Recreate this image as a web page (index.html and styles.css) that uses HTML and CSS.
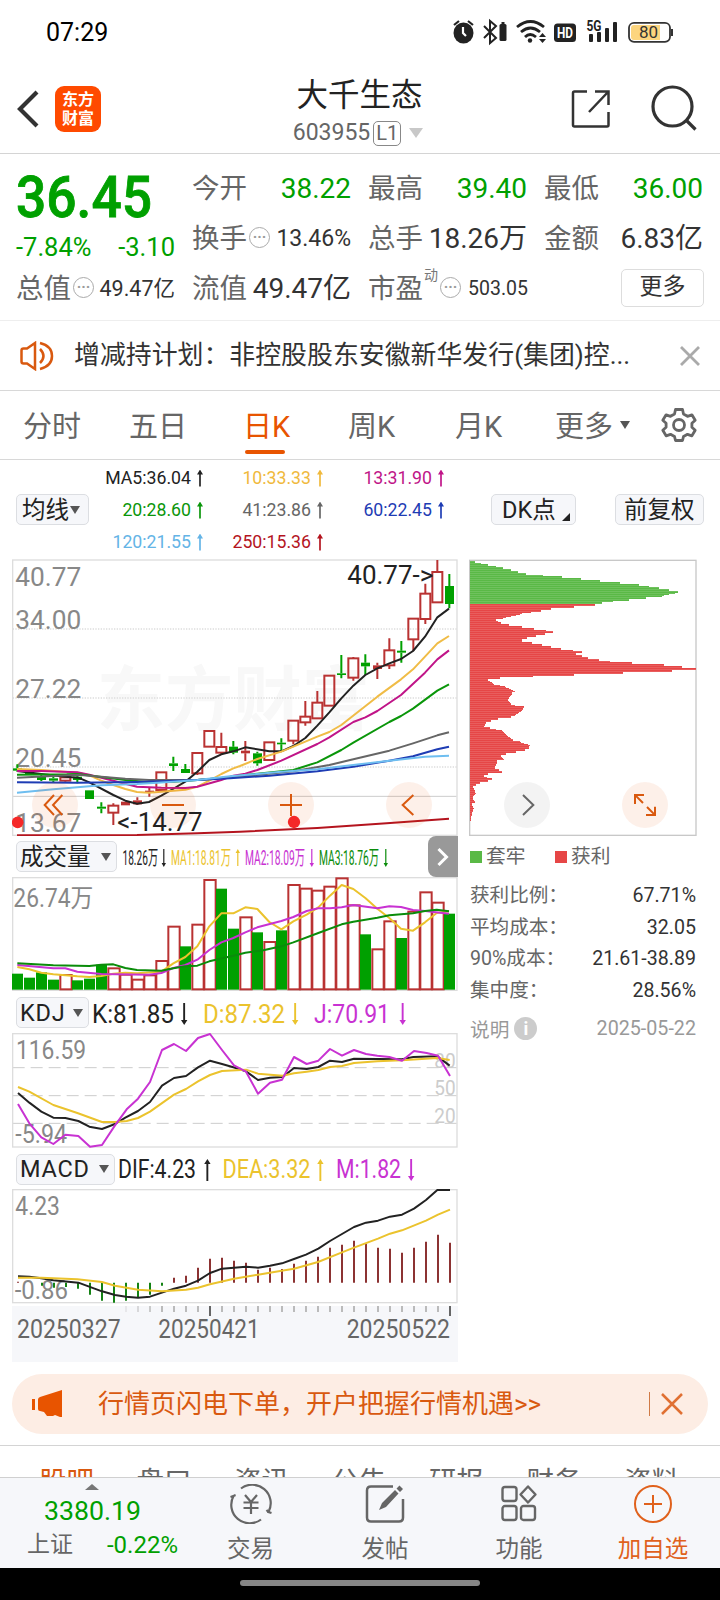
FILE: index.html
```html
<!DOCTYPE html>
<html lang="zh-CN">
<head>
<meta charset="utf-8">
<title>大千生态 603955</title>
<link rel="stylesheet" href="styles.css">
</head>
<body>
<div class="phone">
  <div class="status">
    <span class="clock">07:29</span>
    <svg class="status-icons" width="224" height="36" viewBox="450 14 224 36">
      <g fill="#222">
        <ellipse cx="463.5" cy="33" rx="10" ry="10.5"/>
        <path d="M454 25l5-4M473 25l-5-4" stroke="#222" stroke-width="2.2"/>
        <path d="M463 27v6l3 3" stroke="#fff" stroke-width="2.2" fill="none"/>
        <path d="M484 26l12 12-6 5V21l6 5-12 12" fill="none" stroke="#222" stroke-width="2"/>
        <rect x="499.500" y="24" width="7" height="17" rx="1.500"/><rect x="501.500" y="22" width="3" height="3"/>
        <g fill="none" stroke="#222" stroke-width="2.800"><path d="M517 27q13.500-11 27 0M521 32q9.500-8 19 0M525 37q5-5 11 0"/></g>
        <circle cx="530" cy="40.500" r="2.200"/><path d="M539 37l3.500-4 3.500 4zM539 39l3.500 4 3.500-4z"/>
        <rect x="554" y="23.500" width="22" height="18.500" rx="3.500"/>
        <rect x="589" y="34" width="4" height="8" rx="1"/><rect x="597" y="32" width="4" height="10" rx="1"/><rect x="605" y="28" width="4" height="14" rx="1"/><rect x="613" y="22" width="4" height="20" rx="1"/>
      </g>
      <text x="557" y="38" font-size="15" font-weight="700" fill="#fff" textLength="16" lengthAdjust="spacingAndGlyphs">HD</text>
      <text x="586.500" y="31" font-size="14" font-weight="700" fill="#222" textLength="15" lengthAdjust="spacingAndGlyphs">5G</text>
      <rect x="629" y="22.800" width="41" height="19" rx="5" fill="#fff" stroke="#333" stroke-width="1.800"/>
      <path d="M634 25h26v15h-26q-3 0-3-3v-9q0-3 3-3z" fill="#fcd57e"/>
      <rect x="671" y="29" width="2" height="7" fill="#333"/>
      <text x="639" y="38.300" font-size="17" fill="#333">80</text>
    </svg>
  </div>

  <header class="header">
    <svg class="back" width="22" height="38" viewBox="0 0 22 38"><path d="M20 2L3 19 20 36" fill="none" stroke="#333" stroke-width="4.200"/></svg>
    <div class="logo"><span>东方</span><span>财富</span></div>
    <div class="title">
      <div class="name">大千生态</div>
      <div class="code"><span>603955</span><b class="level">L1</b><i class="down"></i></div>
    </div>
    <svg class="share" width="40" height="40" viewBox="0 0 40 40"><g fill="none" stroke="#333" stroke-width="2.500"><path d="M16 2.500H3.500q-1.500 0-1.500 1.500V36q0 1.500 1.500 1.500H36q1.500 0 1.500-1.500V23"/><path d="M24 2.500h13.500V16M37 3L18 23"/></g></svg>
    <svg class="search" width="46" height="46" viewBox="0 0 46 46"><g fill="none" stroke="#333" stroke-width="3.200"><circle cx="21.500" cy="21.500" r="19.500"/><path d="M35.500 35.500L44.500 44.500"/></g></svg>
  </header>

  <section class="quote">
    <div class="price-box"><svg width="158" height="68" viewBox="0 0 158 68"><text class="price" x="-1" y="52.500" textLength="136" lengthAdjust="spacingAndGlyphs">36.45</text></svg><div class="change"><span>-7.84%</span><span>-3.10</span></div></div>
    <div class="cell r1"><label>今开</label><em class="green">38.22</em></div>
    <div class="cell r1"><label>最高</label><em class="green">39.40</em></div>
    <div class="cell r1"><label>最低</label><em class="green">36.00</em></div>
    <div class="cell r2"><label>换手</label><i class="dots">···</i><em class="mid">13.46%</em></div>
    <div class="cell r2"><label>总手</label><em>18.26万</em></div>
    <div class="cell r2"><label>金额</label><em>6.83亿</em></div>
    <div class="cell r3"><label>总值</label><i class="dots">···</i><em class="small">49.47亿</em></div>
    <div class="cell r3"><label>流值</label><em>49.47亿</em></div>
    <div class="cell r3"><label>市盈</label><sup>动</sup><i class="dots">···</i><em class="pe">503.05</em></div>
    <div class="cell r3 end"><span class="more-btn">更多</span></div>
  </section>

  <section class="notice">
    <svg width="34" height="30" viewBox="0 0 34 30"><g fill="none" stroke="#d9590f" stroke-width="2.500"><path d="M15 2L7 7.500H3.500q-2 0-2 2v11q0 2 2 2H7L15 28zM20 8q7 7 0 14"/><path d="M20 2q12 3 12 13T20 28"/></g></svg>
    <span class="notice-text">增减持计划：非控股股东安徽新华发行(集团)控...</span>
    <svg class="close" width="20" height="20" viewBox="0 0 20 20"><path d="M1 1l18 18M19 1L1 19" stroke="#aaa" stroke-width="2.800"/></svg>
  </section>

  <nav class="tabs">
    <span>分时</span><span>五日</span><span class="active">日K</span><span>周K</span><span>月K</span><span>更多<i class="tri"></i></span>
    <svg width="36" height="36" viewBox="-18 -18 36 36"><g fill="none" stroke="#666" stroke-width="2.800" stroke-linejoin="round"><path d="M-3.500-15.500h7l1 4.500 4 2.300 4.400-1.500 3.300 5.500-3.300 3v4l3.300 3-3.300 5.500-4.400-1.500-4 2.200-1 4h-7l-1-4-4-2.200-4.400 1.500-3.300-5.500 3.300-3v-4l-3.300-3 3.300-5.500 4.400 1.500 4-2.300z"/><circle r="5.500"/></g></svg>
  </nav>

  <section class="ma-bar">
    <span class="pill">均线<i class="tri"></i></span>
    <div class="ma-grid">
      <span class="c-black">MA5:36.04<b class="up"></b></span><span class="c-gold">10:33.33<b class="up"></b></span><span class="c-mag">13:31.90<b class="up"></b></span>
      <span class="c-green">20:28.60<b class="up"></b></span><span class="c-gray">41:23.86<b class="up"></b></span><span class="c-blue">60:22.45<b class="up"></b></span>
      <span class="c-sky">120:21.55<b class="up"></b></span><span class="c-red">250:15.36<b class="up"></b></span>
    </div>
    <span class="pill dk">DK点<i class="corner"></i></span>
    <span class="pill fq">前复权</span>
  </section>

  <main class="charts">
    <div class="left">
      <svg id="price" width="446" height="277" viewBox="36 27 1338 831"></svg>
      <div class="ind vol-head"><span class="pill">成交量<i class="tri"></i></span>
        <svg width="310" height="40" viewBox="120 837 310 40" font-size="20">
          <g fill="#222"><text x="122.500" y="864.500" textLength="35.500" lengthAdjust="spacingAndGlyphs">18.26万</text><path d="M163.200 849h1.200v14h1.600l-2.200 4-2.200-4h1.600z"/></g>
          <g fill="#ebc32d"><text x="171" y="864.500" textLength="60" lengthAdjust="spacingAndGlyphs">MA1:18.81万</text><path d="M237.200 866h1.200v-13h1.600l-2.200-4-2.200 4h1.600z"/></g>
          <g fill="#c832d2"><text x="245" y="864.500" textLength="60" lengthAdjust="spacingAndGlyphs">MA2:18.09万</text><path d="M311.200 849h1.200v14h1.600l-2.200 4-2.200-4h1.600z"/></g>
          <g fill="#0a8c0a"><text x="319" y="864.500" textLength="60" lengthAdjust="spacingAndGlyphs">MA3:18.76万</text><path d="M385.200 849h1.200v14h1.600l-2.200 4-2.200-4h1.600z"/></g>
        </svg>
        <span class="expand"><svg width="14" height="20" viewBox="0 0 14 20"><path d="M2.500 2l8 8-8 8" fill="none" stroke="#fff" stroke-width="3"/></svg></span>
      </div>
      <svg id="volume" width="446" height="114" viewBox="36 127 1338 342"></svg>
      <div class="ind kdj-head"><span class="pill">KDJ<i class="tri"></i></span>
        <svg width="340" height="40" viewBox="90 993 340 40" font-size="25">
          <g fill="#222"><text x="92" y="1022.500" textLength="82" lengthAdjust="spacingAndGlyphs">K:81.85</text><path d="M183.200 1003h1.900v17h2.300l-3.200 5-3.200-5h2.200z"/></g>
          <g fill="#ebc32d"><text x="203" y="1022.500" textLength="82" lengthAdjust="spacingAndGlyphs">D:87.32</text><path d="M294.200 1003h1.900v17h2.300l-3.200 5-3.200-5h2.200z"/></g>
          <g fill="#c832d2"><text x="314" y="1022.500" textLength="76" lengthAdjust="spacingAndGlyphs">J:70.91</text><path d="M401.700 1003h1.900v17h2.300l-3.200 5-3.200-5h2.200z"/></g>
        </svg>
      </div>
      <svg id="kdj" width="446" height="115" viewBox="36 39 1338 345"></svg>
      <div class="ind macd-head"><span class="pill">MACD<i class="tri"></i></span>
        <svg width="320" height="40" viewBox="116 1149 320 40" font-size="25">
          <g fill="#222"><text x="118" y="1178" textLength="78" lengthAdjust="spacingAndGlyphs">DIF:4.23</text><path d="M206.400 1181h1.900v-17h2.300l-3.200-5-3.200 5h2.200z"/></g>
          <g fill="#ebc32d"><text x="222.500" y="1178" textLength="88" lengthAdjust="spacingAndGlyphs">DEA:3.32</text><path d="M319.400 1181h1.900v-17h2.300l-3.200-5-3.200 5h2.200z"/></g>
          <g fill="#c832d2"><text x="336" y="1178" textLength="65" lengthAdjust="spacingAndGlyphs">M:1.82</text><path d="M410.200 1159h1.900v17h2.300l-3.200 5-3.200-5h2.200z"/></g>
        </svg>
      </div>
      <svg id="macd" width="446" height="115" viewBox="36 28 1338 345"></svg>
      <svg id="axis" class="axis" width="446" height="56" viewBox="36 378 1338 168"></svg>
    </div>
    <aside class="right">
      <svg id="chips" width="228" height="277" viewBox="27 27 684 831"></svg>
      <div class="legend"><span><i class="sq g"></i>套牢</span><span><i class="sq r"></i>获利</span></div>
      <dl class="stats">
        <dt>获利比例：</dt><dd>67.71%</dd>
        <dt>平均成本：</dt><dd>32.05</dd>
        <dt>90%成本：</dt><dd>21.61-38.89</dd>
        <dt>集中度：</dt><dd>28.56%</dd>
      </dl>
      <div class="note"><span>说明</span><i class="info">i</i><time>2025-05-22</time></div>
    </aside>
  </main>

  <div class="banner">
    <svg width="31" height="28" viewBox="0 0 31 28"><path d="M0 9h3v11H0zM6 9.500q0-2 2-2.500L30 0v27h-2l-5-2-2 1h-6l-3-4-4-1q-2 0-2-2z" fill="#e85400"/></svg>
    <span class="banner-text">行情页闪电下单，开户把握行情机遇&gt;&gt;</span>
    <i class="bar"></i>
    <svg width="22" height="22" viewBox="0 0 22 22"><path d="M1 1l20 20M21 1L1 21" stroke="#e07033" stroke-width="2.500"/></svg>
  </div>

  <div class="subtabs"><span class="active">股吧</span><span>盘口</span><span>资讯</span><span>公告</span><span>研报</span><span>财务</span><span>资料</span></div>

  <footer class="bottom">
    <div class="index"><i class="caret"></i><b>3380.19</b><div><span>上证</span><em>-0.22%</em></div></div>
    <div class="item"><svg width="44" height="40" viewBox="-22 -20 44 40"><g fill="none" stroke="#666" stroke-width="2.200"><path d="M-10-15.500A18.500 18.500 0 0 1 17.500 8l3 1M17.500 8l-2-2M10 15.500A18.500 18.500 0 0 1-17.500-8l-3 1M-17.500-8l2-1"/><path d="M-6-9L0-2l6-7M-7.500-1.500h15M-7.500 4h15M0-2v12"/></g></svg><span>交易</span></div>
    <div class="item"><svg width="44" height="40" viewBox="-22 -20 44 40"><path d="M8-17.500h-22q-4 0-4 4v27q0 4 4 4h28q4 0 4-4V-5" fill="none" stroke="#666" stroke-width="2.500"/><path d="M-6 6l3-7L10-14l3.500 3.500L1 3zM11.500-15.500l3-3 3.500 3.500-3 3z" fill="#666"/></svg><span>发帖</span></div>
    <div class="item"><svg width="44" height="40" viewBox="-22 -20 44 40"><g fill="none" stroke="#666" stroke-width="2.400"><rect x="-16.500" y="-17" width="14" height="14" rx="2.500"/><rect x="-16.500" y="2" width="14" height="14" rx="2.500"/><rect x="2" y="2" width="14" height="14" rx="2.500"/><path d="M9-17.500l7.500 8L9-1.500l-7.500-8z" stroke-linejoin="round"/></g></svg><span>功能</span></div>
    <div class="item add"><svg width="44" height="40" viewBox="-22 -20 44 40"><g fill="none" stroke="#e0611c" stroke-width="2"><circle r="18"/><path d="M-9 0H9M0-9V9"/></g></svg><span>加自选</span></div>
  </footer>
  <div class="home"><i></i></div>
</div>
<script src="charts.js"></script>
</body>
</html>
```
FILE: styles.css
```css
* { box-sizing: border-box; }
body { margin: 0; background: #fff; color: #333; font-family: Roboto, "Noto Sans CJK SC", sans-serif; font-weight: 400; }
i, em { font-style: normal; }
svg { display: block; flex: none; font-family: Roboto, "Noto Sans CJK SC", sans-serif; }
.phone { width: 720px; height: 1600px; overflow: hidden; display: flex; flex-direction: column; }
.phone > * { flex: none; white-space: nowrap; }
.green { color: #00a000; }

.status { height: 64px; padding: 14px 46px 0; display: flex; justify-content: space-between; }
.clock { font-size: 25px; line-height: 37px; color: #000; }

.header { height: 90px; border-bottom: 1px solid #d4d4d4; display: grid; grid-template-columns: 55px 46px 1fr 40px 46px; align-items: start; padding-right: 23px; }
.back { margin: 26px 0 0 17px; }
.logo { margin-top: 22px; height: 46px; border-radius: 9px; background: #ff4a00; color: #fff; font-size: 16px; font-weight: 700; line-height: 19px; padding-top: 4px; display: flex; flex-direction: column; align-items: center; }
.title { margin-right: -9px; display: flex; flex-direction: column; align-items: center; }
.name { font-size: 31.500px; line-height: 40px; margin: 12px 2px 0 0; color: #222; }
.code { display: flex; align-items: center; font-size: 23px; line-height: 36px; color: #666; margin: -1px 5px 0 0; }
.level { font-weight: 400; font-size: 20px; line-height: 22px; height: 25px; width: 28px; text-align: center; border: 1.500px solid #888; border-radius: 5px; margin-left: 3px; }
.down { border: 7px solid transparent; border-top: 10px solid #c8c8c8; border-bottom: 0; margin-left: 8px; }
.share { margin: 25px 0 0 -40px; }
.search { margin: 21px 0 0; }

.quote { height: 167px; border-bottom: 1px solid #eee; padding: 10px 17px 0; display: grid; grid-template-columns: repeat(4, 158px); column-gap: 18px; grid-template-rows: 50px 50px 50px; }
.price-box { grid-row: 1 / 3; color: #00a000; }
.price { font-size: 57px; font-weight: 500; fill: #00a000; stroke: #00a000; stroke-width: .800px; }
.change { display: flex; justify-content: space-between; font-size: 25.500px; line-height: 30px; margin: 0 0 0 -1px; }
.cell { display: flex; align-items: center; line-height: 40px; height: 50px; font-size: 28px; }
.cell label { color: #666; font-size: 27.500px; margin-left: -1px; }
.cell em { margin-left: auto; }
.cell em.mid { font-size: 23px; }
.cell em.small { font-size: 21.500px; }
.cell em.pe { font-size: 19.500px; margin-right: -1px; }
.cell sup { font-size: 14px; line-height: 16px; color: #777; align-self: flex-start; margin: 3px 0 0 1px; }
.dots { width: 21px; height: 21px; border: 1.500px solid #aaa; border-radius: 50%; font-size: 15px; line-height: 18px; font-weight: 700; color: #999; text-align: center; margin: -4px 0 0 2px; }
.end { justify-content: flex-end; }
.more-btn { width: 83px; height: 38px; border: 1px solid #ddd; border-radius: 5px; font-size: 23px; line-height: 34px; text-align: center; margin: -2px -1px 0 0; }

.notice { height: 70px; border-bottom: 1px solid #d8d8d8; padding: 0 20px; display: flex; align-items: center; }
.notice-text { font-size: 25.900px; line-height: 40px; margin: -1px 0 0 20px; flex: 1; }

.tabs { height: 69px; border-bottom: 1px solid #d8d8d8; padding-left: 23px; display: grid; grid-template-columns: 106px 114px 105px 107px 100px 106px 40px; font-size: 29px; line-height: 72px; color: #666; }
.tabs span { height: 68px; }
.tabs svg { margin-top: 16px; }
.tabs .active { color: #e85400; }
.tabs .active::after { content: ""; display: block; width: 40px; height: 4px; border-radius: 2px; background: #e85400; margin: -13px 0 0 2px; }
.tri { display: inline-block; border: 5px solid transparent; border-top: 8px solid #555; border-bottom: 0; vertical-align: middle; }
.tabs .tri { margin: -8px 0 0 7px; }

.ma-bar { height: 99px; display: flex; align-items: center; padding: 0 16px; }
.pill { height: 31px; border: 1.500px solid #dcdee2; border-radius: 5px; background: #f6f7fa; color: #222; font-size: 23.500px; line-height: 28px; padding: 0 5px 0 3px; display: inline-flex; align-items: center; }
.ma-bar .pill { width: 73px; padding-left: 5px; }
.ma-bar .pill .tri { margin-left: 1px; }
.ma-bar .dk { width: 85px; padding-left: 10px; margin-left: auto; }
.corner { border-left: 8px solid transparent; border-bottom: 8px solid #222; margin: 14px 0 0 6px; }
.ma-bar .fq { width: 89px; padding-left: 8px; margin-left: 39px; }
.ma-grid { display: grid; grid-template-columns: 115px 120px 121px; grid-template-rows: 32px 32px 32px; font-size: 17.700px; line-height: 32px; margin-top: 1px; }
.ma-grid span { display: flex; justify-content: flex-end; align-items: center; }
.up { width: 6px; height: 17px; flex: none; background: currentColor; clip-path: polygon(50% 0, 100% 30%, 64% 30%, 64% 100%, 36% 100%, 36% 30%, 0 30%); margin-left: 6px; margin-right: 1px; }
.c-black { color: #222; } .c-gold { color: #f0b93c; } .c-mag { color: #c01488; } .c-green { color: #0a960a; }
.c-gray { color: #666; } .c-blue { color: #1e3cb4; } .c-sky { color: #64b4e6; } .c-red { color: #b4141e; }

.charts { height: 815px; display: flex; padding-left: 12px; }
.left { width: 446px; }
.right { width: 228px; margin-left: 11px; }
.ind { height: 41px; display: flex; align-items: center; padding: 1px 0 0 4px; }
.ind .tri { margin-left: auto; }
.vol-head { padding-top: 0; }
.vol-head .pill { width: 101px; }
.vol-head svg { margin-left: 3px; }
.vol-head .expand { width: 30px; height: 41px; margin-left: -2px; background: #999; border-radius: 8px 0 0 8px; flex: none; display: flex; align-items: center; justify-content: center; }
.vol-head .expand svg { margin: 0; }
.kdj-head { height: 42px; } .kdj-head .pill { width: 73px; letter-spacing: .800px; }
.kdj-head svg { margin-left: 1px; }
.macd-head { height: 41px; } .macd-head .pill { width: 99px; letter-spacing: .800px; }
.macd-head svg { margin-left: 1px; }
.axis { margin-top: 2px; background: #f6f7fa; }

.legend { display: grid; grid-template-columns: 85px 1fr; font-size: 19.700px; line-height: 42px; height: 40px; color: #666; padding-left: 1px; }
.sq { display: inline-block; width: 12px; height: 12px; margin-right: 4px; }
.sq.g { background: #5ab946; } .sq.r { background: #e64646; }
.stats { margin: 4px 13px 0 1px; display: grid; grid-template-columns: auto 1fr; grid-auto-rows: 31.600px; font-size: 19.600px; line-height: 32px; width: 226px; }
.stats dt { color: #666; } .stats dd { margin: 0; text-align: right; }
.note { display: flex; align-items: center; height: 44px; margin: 0 1px 0 1px; font-size: 19.700px; color: #999; }
.info { width: 23px; height: 23px; border-radius: 50%; background: #ccc; color: #fff; font-weight: 700; font-size: 18px; line-height: 23px; text-align: center; margin-left: 5px; }
.note time { margin-left: auto; }

.banner { margin: 0 12px; height: 60px; border-radius: 30px; background: #fdede4; display: flex; align-items: center; padding: 0 25px 0 20px; color: #d9590f; }
.banner-text { font-size: 26px; line-height: 40px; margin: -1px 0 0 35px; flex: 1; }
.bar { width: 1.500px; height: 24px; background: #d07a46; margin-right: 11px; }

.subtabs { margin-top: 11px; height: 32px; border-top: 1px solid #d4d4d4; overflow: hidden; display: grid; grid-template-columns: repeat(7, 97.500px); padding-left: 39px; font-size: 27.500px; line-height: 40px; padding-top: 16px; color: #666; }
.subtabs .active { color: #d9590f; }
.bottom { height: 91px; background: #f6f7fa; border-top: 1px solid #d0d0d0; display: grid; grid-template-columns: 183px 135px 134px 134px 134px; color: #666; }
.index { display: flex; flex-direction: column; align-items: center; }
.index .caret { border: 7px solid transparent; border-bottom: 6px solid #777; border-top: 0; margin: 6px 0 0 1px; }
.index b { font-weight: 400; font-size: 26.700px; line-height: 42px; color: #00a000; margin-left: 2px; }
.index div { display: flex; font-size: 23px; line-height: 32px; padding-left: 22px; gap: 34px; margin-top: -3px; }
.index em { color: #00a000; font-size: 24px; }
.item { display: flex; flex-direction: column; align-items: center; font-size: 23.500px; line-height: 32px; }
.item svg { margin: 6px 0 9px; }
.add { color: #e0611c; }
.home { height: 32px; background: #000; padding-top: 12px; }
.home i { display: block; width: 240px; height: 6px; border-radius: 3px; background: #868686; margin: 0 auto; }

.label { fill: #888; font-size: 75px; }
.line { fill: none; stroke-width: 6; stroke-linejoin: round; }
.frame { fill: none; stroke: #ddd; stroke-width: 4; }
```
FILE: charts.js
```js
// All chart data is in thirds of a pixel, one trading day every 36 units.
const RED = '#b93232', GREEN = '#00a000';
const set = (id, html) => { document.getElementById(id).innerHTML = html; };
const line = (c, pts) => `<polyline class="line" stroke="${c}" points="${pts}"/>`;
const rect = (x, y, w, h, a) => `<rect x="${x}" y="${y}" width="${w}" height="${h}" ${a}/>`;
const text = (x, y, w, s, a = 'class="label"') => `<text x="${x}" y="${y}" textLength="${w}" lengthAdjust="spacingAndGlyphs" ${a}>${s}</text>`;
const button = (x, icon, bg = '#e85000', c = '#d9590f') => `<circle cx="${x}" cy="765" r="69" fill="${bg}" opacity=".085"/><path d="${icon}" fill="none" stroke="${c}" stroke-width="6"/>`;

// color, filled, body top, body bottom, high, low
const candles = [
  'g1 655 662 643 665','g1 668 673 666 675','g1 680 690 675 693','g1 685 692 680 697','r0 682 692 675 695','g1 680 690 675 700',
  'g1 721 747 721 747','g1 770 776 757 790','r0 767 788 760 825','r1 755 766 755 766','r1 751 763 742 765','r1 722 728 712 740',
  'r0 667 720 667 720','g1 640 648 620 663','g1 657 669 642 669','r0 609 670 609 675','r0 543 590 543 590','r0 591 608 548 612',
  'g1 590 608 573 613','r1 602 610 573 633','g1 610 640 605 647','r0 577 630 577 630','g1 578 583 565 603','r0 512 572 512 583',
  'r0 500 517 453 527','r0 458 505 423 505','r0 377 467 377 467','g1 370 375 315 385','r0 325 383 321 392','g1 338 349 313 375',
  'r1 346 357 338 387','r0 301 346 265 357','g1 302 308 273 338','r0 206 268 206 303','r0 131 207 101 222','r0 66 157 30 157','g1 108 162 72 175'];
const drawCandle = (s, k) => {
  const [t, a, b, hi, lo] = s.split(' ');
  const x = 52 + 36 * k, c = t[0] === 'g' ? GREEN : RED;
  const wick = `<path d="M${x} ${hi}V${a}M${x} ${b}V${lo}" stroke="${c}" stroke-width="6"/>`;
  return wick + (t[1] === '1' ? rect(x - 13, a, 27, b - a, `fill="${c}"`)
    : rect(x - 15, a, 30, b - a, `fill="none" stroke="${c}" stroke-width="6"`));
};
set('price',
  text(290, 525, 820, '东方财富', 'font-size="212" font-weight="700" fill="#f8f8f8"') +
  `<path d="M38 237H1370M38 444H1370M38 651H1370" stroke="#ddd" stroke-width="4" stroke-dasharray="4 4"/><path d="M38 739H1370" stroke="#ccc" stroke-width="3"/>` +
  '<rect class="frame" x="38" y="30" width="1333" height="826"/>' +
  text(46, 108, 198, '40.77') + text(46, 238, 198, '34.00') + text(46, 445, 198, '27.22') + text(46, 652, 198, '20.45') + text(46, 846, 198, '13.67') +
  candles.map(drawCandle).join('') +
  line('#222', '51,663 124,672 196,680 235,683 268,697 340,735 376,752 411,761 447,756 484,737 519,717 556,695 592,665 628,630 664,613 700,604 736,592 808,604 844,604 880,588 916,564 952,527 988,487 1024,445 1060,407 1096,375 1132,355 1168,340 1203,327 1239,303 1275,260 1312,202 1347,176') +
  line('#f0bc46', '51,657 124,660 232,668 268,676 304,692 340,705 376,717 411,726 447,728 520,722 556,719 592,710 628,692 664,672 700,655 720,648 772,627 844,605 880,590 952,560 988,546 1024,525 1132,440 1203,388 1239,358 1275,320 1312,280 1347,258') +
  line('#c01488', '51,663 124,663 232,667 268,674 340,692 411,710 484,713 556,714 592,710 664,690 700,677 736,671 772,660 844,632 952,582 988,562 1060,516 1096,502 1132,483 1203,435 1275,368 1312,328 1347,301') +
  line('#0a960a', '51,674 200,673 232,672 304,681 376,690 447,697 520,695 592,690 664,684 772,671 844,664 880,660 952,637 1024,600 1060,578 1168,516 1203,498 1239,476 1312,422 1347,403') +
  line('#666', '51,683 232,674 304,680 376,686 447,690 592,690 736,678 880,664 988,645 1060,628 1168,602 1239,580 1312,556 1347,547') +
  line('#1e3cb4', '51,697 232,698 411,696 592,690 690,685 808,677 952,664 1060,650 1168,632 1239,619 1312,598 1347,590') +
  line('#6ebef0', '51,728 160,718 304,706 411,702 520,695 592,690 690,679 844,665 952,658 1168,632 1275,620 1347,617') +
  line('#b4141e', '51,856 411,855 592,850 720,845 952,834 1160,820 1347,806') +
  button(165, 'M162 735L134 765 162 795M187 735L159 765 187 795') + button(519, 'M486 765H552') +
  button(873, 'M840 765H906M873 732V798') + button(1227, 'M1240 735L1208 765 1240 795') +
  '<circle cx="53" cy="817" r="17.500" fill="#f52828"/><circle cx="882" cy="816" r="18.500" fill="#f52828"/>' +
  text(352, 842, 256, '&lt;-14.77', 'font-size="75" fill="#222"') + text(1042, 101, 258, '40.77-&gt;', 'font-size="75" fill="#222"'));

const volumes = 'g417 g429 g413 g435 r419 g437 g432 g390 r399 r418 r433 r420 r377 r274 g335 r268 r134 g162 g282 r246 g293 r320 g287 r149 r160 r166 r154 r129 r210 g299 r342 r258 g310 r229 r171 r202 g237'.split(' ');
set('volume',
  '<rect class="frame" x="38" y="129" width="1333" height="338"/>' + text(40, 218, 240, '26.74万') +
  volumes.map((v, k) => {
    const y = +v.slice(1), x = 53 + 36 * k;
    return v[0] === 'g' ? rect(x - 17, y, 33, 465 - y, `fill="${GREEN}"`) : rect(x - 16, y + 2, 34, 462 - y, `fill="#fff" stroke="${RED}" stroke-width="6"`);
  }).join('') +
  line('#ebc32d', '52,397 88,404 124,414 160,419 232,425 268,427 304,424 340,417 376,414 411,416 484,411 520,386 556,367 592,335 628,275 664,236 700,236 736,218 772,223 808,262 844,284 880,260 920,240 955,218 990,183 1025,151 1060,163 1096,190 1132,222 1168,250 1203,282 1239,288 1275,263 1310,235 1347,230') +
  line('#c832d2', '52,391 160,401 196,401 232,411 304,418 447,420 484,415 520,400 556,391 592,375 628,346 664,323 700,310 736,293 772,278 844,259 880,247 920,229 955,221 990,221 1025,218 1060,211 1132,221 1168,215 1203,217 1239,226 1275,229 1347,237') +
  line('#0a8c0a', '52,386 160,392 268,394 304,390 340,389 376,400 411,406 484,408 520,401 556,395 592,393 628,380 700,363 736,354 790,347 844,335 880,323 955,295 1025,269 1060,261 1132,249 1168,242 1239,236 1275,229 1310,225 1347,230'));

set('kdj',
  '<path d="M38 143H1370M38 227H1370M38 310H1370" stroke="#ccc" stroke-width="3" stroke-dasharray="36 18"/><rect class="frame" x="38" y="41" width="1333" height="340"/>' +
  text(48, 118, 210, '116.59') + text(46, 369, 155, '-5.94') +
  text(1303, 143, 64, '80', 'font-size="60" fill="#ccc"') + text(1303, 226, 64, '50', 'font-size="60" fill="#ccc"') + text(1303, 309, 64, '20', 'font-size="60" fill="#ccc"') +
  line('#222', '54,219 88,248 124,275 160,293 196,294 235,303 268,320 306,327 345,312 376,293 414,273 450,246 486,197 522,174 558,168 594,142 630,122 666,132 700,142 738,154 774,180 810,173 848,171 882,144 920,147 955,141 990,122 1026,126 1062,116 1206,118 1240,111 1312,109 1349,137') +
  line('#ebc32d', '54,201 88,215 160,255 232,279 306,306 345,306 380,303 414,294 450,275 522,224 558,207 594,184 630,165 666,153 738,149 774,161 848,167 882,160 920,155 955,150 990,141 1026,138 1062,129 1132,124 1206,121 1312,114 1349,120') +
  line('#c832d2', '54,252 88,310 124,352 160,372 196,344 235,348 270,380 306,375 345,316 380,268 414,236 450,186 486,90 522,72 558,93 594,54 630,42 666,90 702,136 738,155 774,221 810,188 846,179 882,111 920,132 955,122 990,87 1026,107 1062,90 1098,102 1132,107 1168,111 1206,122 1242,93 1280,99 1314,107 1350,168'));

const hist = [306, 309, 318, 324, 322, 327, 345, 363, 369, 363, 354, 345, 318, 294, 288, 264, 237, 234, 243, 249, 270, 264, 268, 252, 243, 231, 204, 195, 183, 192, 204, 207, 219, 204, 186, 165, 189];
set('macd',
  '<rect class="frame" x="38" y="30" width="1333" height="339"/>' + text(46, 106, 134, '4.23') + text(44, 357, 160, '-0.86') +
  hist.map((y, k) => `<path d="M${54 + 36 * k} 309V${y}" stroke="${y > 309 ? '#148214' : '#8c3232'}" stroke-width="6"/>`).join('') +
  line('#222', '54,290 88,291 124,296 160,302 235,309 306,335 345,346 378,351 414,354 450,351 486,339 522,327 558,318 594,303 630,280 666,267 738,261 774,264 810,258 846,251 882,238 918,225 955,207 990,184 1062,142 1098,129 1134,123 1170,111 1206,105 1242,87 1278,61 1312,31 1350,31') +
  line('#ebc32d', '54,294 124,294 232,299 306,307 345,318 414,330 486,335 558,330 594,324 630,314 702,297 774,285 882,267 954,247 1026,218 1062,204 1134,177 1170,162 1206,152 1278,123 1314,105 1350,90'));

let ticks = '';
for (let k = 9; k <= 36; k++) {
  const major = k === 16 || k === 36;
  ticks += `<path d="M${54 + 36 * k} 378V${major ? 408 : 396}" stroke="${major ? '#666' : '#bbb'}" stroke-width="6" opacity="${Math.min(1, (k - 8) / 4)}"/>`;
}
const date = 'font-size="75" fill="#666"';
set('axis', ticks + text(51, 475, 311, '20250327', date) + text(475, 475, 304, '20250421', date) + text(1040, 475, 310, '20250522', date));

// Cost distribution outline: bar end, y
const outline = '30,31 45,36 62,39 85,44 108,49 130,54 152,60 175,66 198,71 248,76 306,81 364,87 421,93 479,98 538,104 567,109 596,115 626,120 655,128 606,137 557,143 508,149 459,154 425,159 405,165 343,170 272,176 242,182 213,187 185,192 130,204 107,209 115,214 124,219 147,225 185,230 222,236 258,241 279,246 255,252 228,258 202,264 187,271 215,279 245,286 273,291 302,296 340,301 366,307 348,313 366,318 385,323 416,329 449,334 516,339 612,345 666,351 708,357 636,363 489,369 341,374 219,379 120,384 85,391 102,401 119,406 136,411 165,423 157,430 142,450 153,461 165,466 191,472 185,483 165,495 153,501 114,506 92,512 78,518 73,529 90,533 108,538 127,543 140,556 158,568 180,576 210,585 208,592 195,600 168,605 138,610 122,618 131,627 112,632 108,645 106,652 117,659 126,665 84,671 72,677 80,682 96,687 84,692 60,698 48,706 40,712 47,730 37,743 46,757 36,763 41,775 36,790 32,810 30,820'
  .split(' ').map(p => p.split(',').map(Number));
let bars = '', i = 0;
for (let y = 31; y < 820; y += 3) {
  while (i < outline.length - 2 && outline[i + 1][1] < y) i++;
  const [x0, y0] = outline[i], [x1, y1] = outline[i + 1];
  const x = y1 - y0 > 8 ? x0 + (x1 - x0) * (y - y0) / (y1 - y0) : (y - y0 < y1 - y ? x0 : x1);
  const w = Math.max(1, x - 30);
  bars += rect(30, y - 1, w, 3, `fill="${y < 162 ? '#5ab946' : '#e64646'}"`);
  if (Math.round((y - 31) / 3) % 2) bars += rect(30, y - 1, w, 3, 'fill="#fff" opacity=".13"');
}
set('chips', '<rect x="29" y="31" width="679" height="825" fill="none" stroke="#c8c8c8" stroke-width="4"/><g shape-rendering="crispEdges">' + bars + '</g>' +
  button(201, 'M189 735L220 765 189 795', '#888', '#666').replace('.085', '.1') +
  button(555, 'M525 762V735H552M527 737L549 759M585 770V795H558M583 793L561 771'));
```
